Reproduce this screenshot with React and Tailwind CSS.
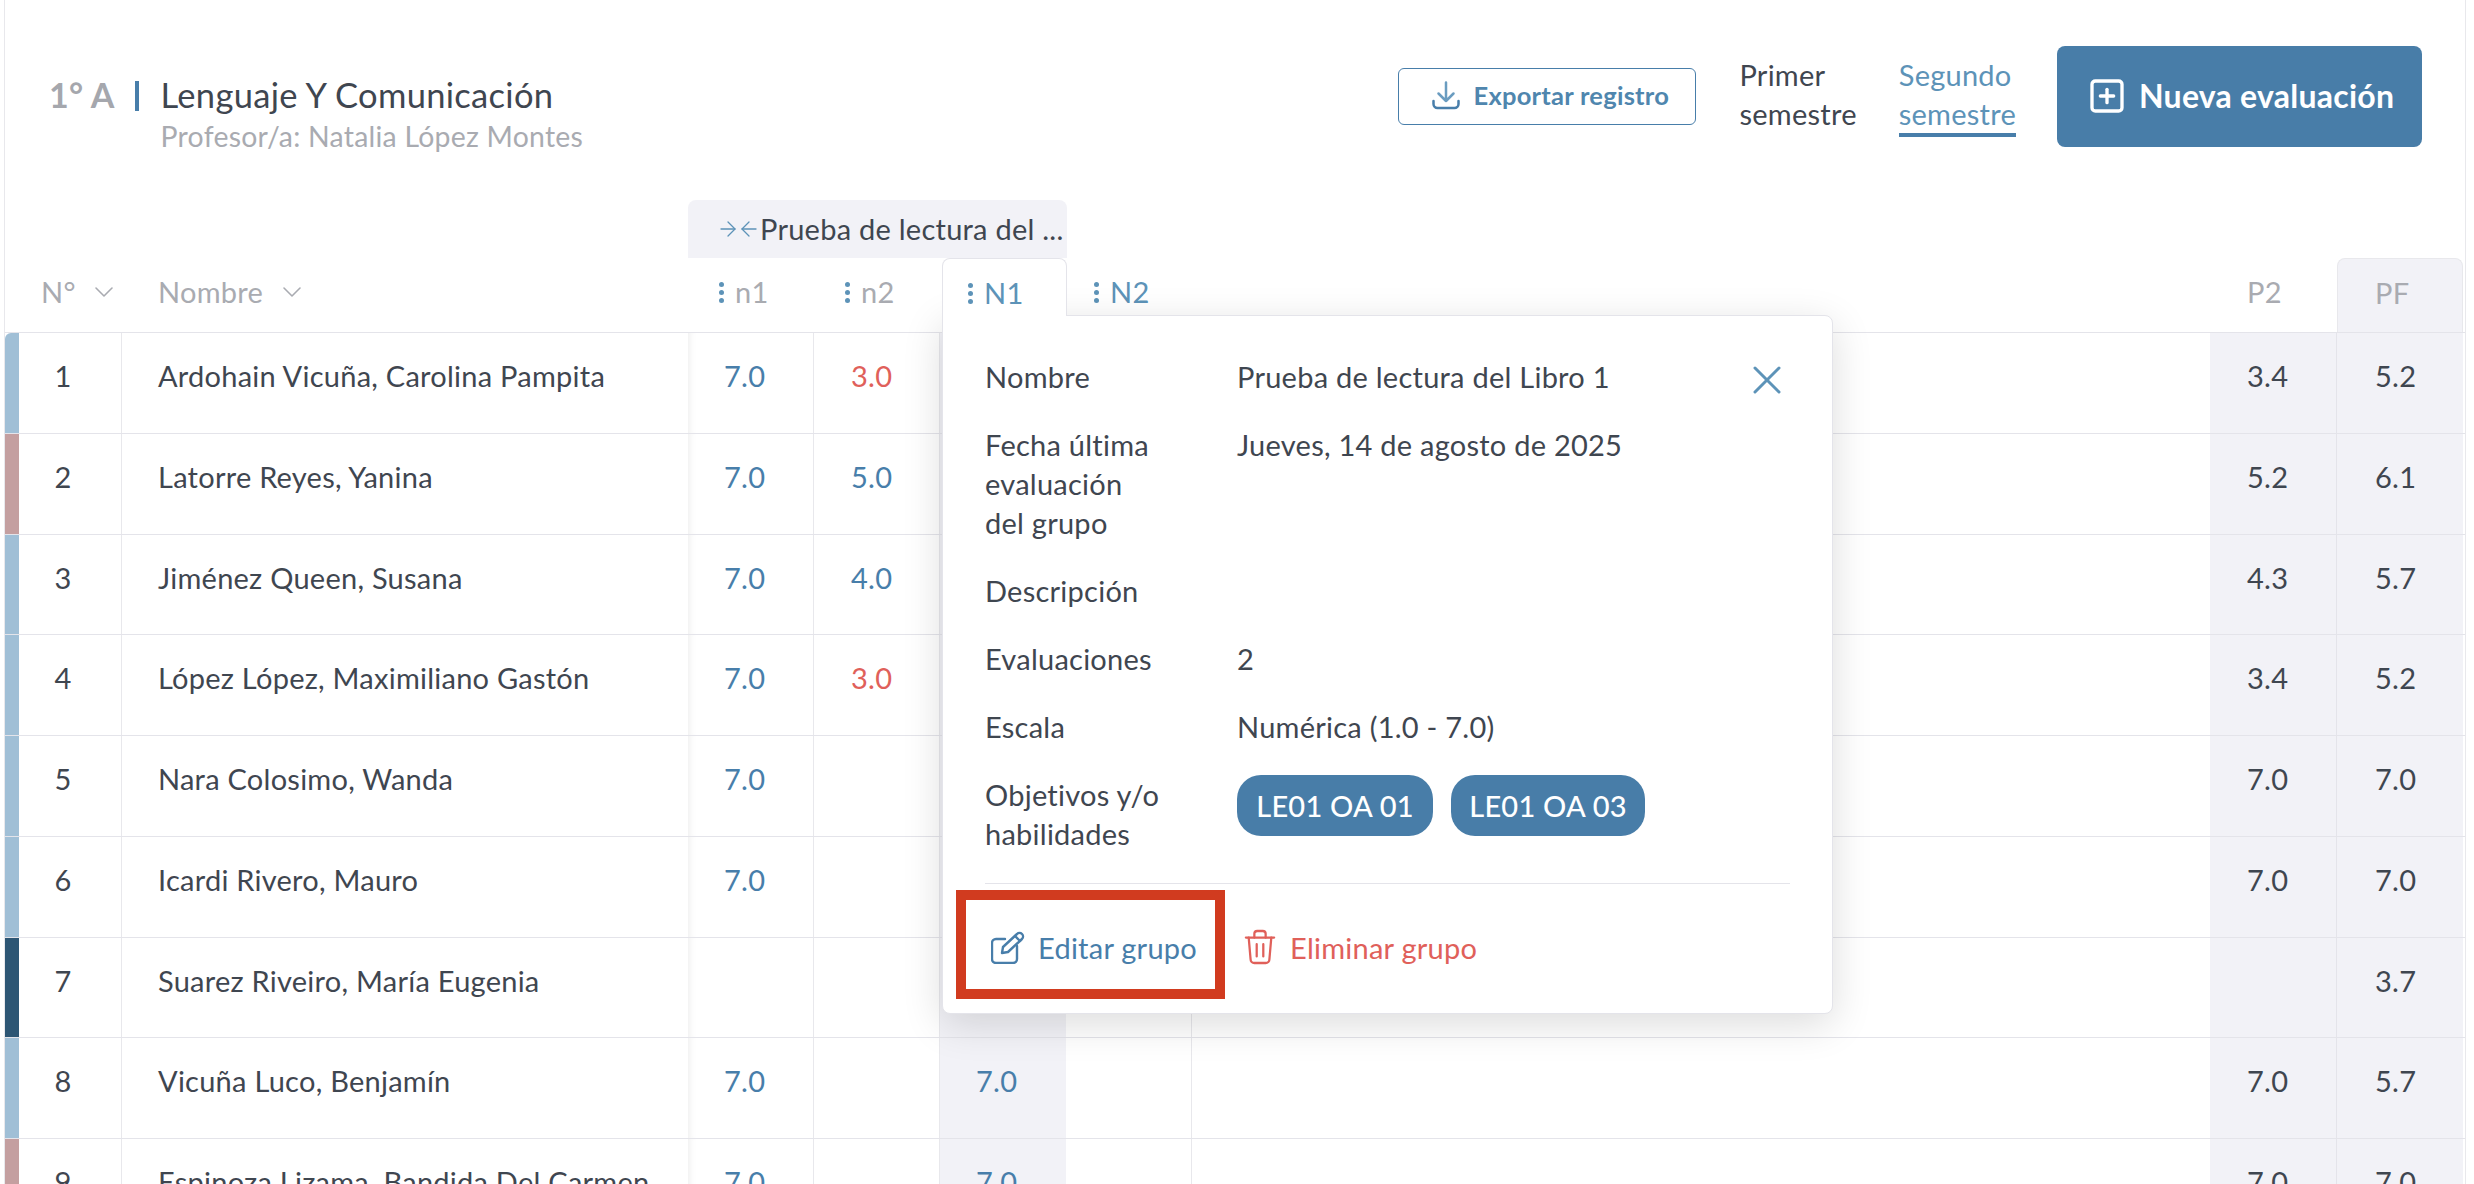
import { ArrowLeft, ArrowRight, ChevronDown, SquarePlus, X } from "lucide-react";

const rows = [
  { n: 1, name: "Ardohain Vicuña, Carolina Pampita", bar: "bg-[#a0bfd6] rounded-tl-[6px]", a: "7.0", b: "3.0", red: true, p2: "3.4", pf: "5.2" },
  { n: 2, name: "Latorre Reyes, Yanina", bar: "bg-[#c49fa0]", a: "7.0", b: "5.0", p2: "5.2", pf: "6.1" },
  { n: 3, name: "Jiménez Queen, Susana", bar: "bg-[#a0bfd6]", a: "7.0", b: "4.0", p2: "4.3", pf: "5.7" },
  { n: 4, name: "López López, Maximiliano Gastón", bar: "bg-[#a0bfd6]", a: "7.0", b: "3.0", red: true, p2: "3.4", pf: "5.2" },
  { n: 5, name: "Nara Colosimo, Wanda", bar: "bg-[#a0bfd6]", a: "7.0", p2: "7.0", pf: "7.0" },
  { n: 6, name: "Icardi Rivero, Mauro", bar: "bg-[#a0bfd6]", a: "7.0", p2: "7.0", pf: "7.0" },
  { n: 7, name: "Suarez Riveiro, María Eugenia", bar: "bg-[#2d5674]", pf: "3.7" },
  { n: 8, name: "Vicuña Luco, Benjamín", bar: "bg-[#a0bfd6]", a: "7.0", c: "7.0", p2: "7.0", pf: "5.7" },
  { n: 9, name: "Espinoza Lizama, Bandida Del Carmen", bar: "bg-[#c49fa0]", a: "7.0", c: "7.0", p2: "7.0", pf: "7.0" },
];

function Kebab() {
  return (
    <span className="flex flex-col gap-[3px] mr-[11px]">
      <span className="w-[5px] h-[5px] rounded-full bg-[#5d93b8]" />
      <span className="w-[5px] h-[5px] rounded-full bg-[#5d93b8]" />
      <span className="w-[5px] h-[5px] rounded-full bg-[#5d93b8]" />
    </span>
  );
}

function ColHead({ label, active, pl }) {
  return (
    <div className={`w-[126px] shrink-0 flex items-center h-[40px] mt-[14px] ${pl} ${active ? "text-[#5d93b8]" : "text-[#a9abb1]"}`}>
      <Kebab />
      {label}
    </div>
  );
}

function Row({ row }) {
  return (
    <div className="flex h-[100.75px] pr-[2px] border-b border-[#e4e4ea] text-[#3f4650] leading-[40px]">
      <div className="relative w-[117px] shrink-0 border-r border-[#e8e8ec] pt-[23px] text-center">
        <span className={`absolute left-0 top-0 bottom-0 w-[14px] ${row.bar}`} />
        {row.n}
      </div>
      <div className="w-[566px] shrink-0 pt-[23px] pl-[36px]">{row.name}</div>
      <div className="w-[126px] shrink-0 border-r border-[#e8e8ec] pt-[23px] pl-[36px] text-[#487eaa] shadow-[inset_8px_0_8px_-8px_rgba(0,0,0,0.1)]">{row.a}</div>
      <div className={`w-[126px] shrink-0 border-r border-[#e8e8ec] pt-[23px] pl-[37px] ${row.red ? "text-[#e0605a]" : "text-[#487eaa]"}`}>{row.b}</div>
      <div className="w-[126px] shrink-0 bg-[#f2f2f7] pt-[23px] pl-[36px] text-[#487eaa]">{row.c}</div>
      <div className="w-[126px] shrink-0 border-r border-[#e8e8ec]" />
      <div className="flex-1" />
      <div className="w-[127px] shrink-0 bg-[#f2f2f7] border-r border-[#e4e4ea] pt-[23px] pl-[37px]">{row.p2}</div>
      <div className="w-[126px] shrink-0 bg-[#f2f2f7] pt-[23px] pl-[38px]">{row.pf}</div>
    </div>
  );
}

function InfoRow({ label, children }) {
  return (
    <div className="flex">
      <div className="w-[252px] shrink-0">
        <div className="max-w-[176px]">{label}</div>
      </div>
      <div className="flex-1">{children}</div>
    </div>
  );
}

export default function App() {
  return (
    <div className="relative w-[2474px] h-[1184px] overflow-hidden bg-white font-['Lato','Noto_Sans',sans-serif] text-[29px] tracking-[0.25px]">
      <div className="ml-[4px] mr-[8px] h-[1184px] border-x border-[#e8e8ec]">

        {/* top bar */}
        <div className="flex items-start h-[200px] pl-[44px] pr-[43px]">
          <div className="flex items-start mt-[72px]">
            <span className="text-[34px] leading-[46px] font-bold text-[#a5a7ad]">1° A</span>
            <span className="w-[4px] h-[30px] mt-[9px] bg-[#487eaa] ml-[20px] mr-[22px]" />
            <div>
              <div className="text-[34.5px] leading-[46px] tracking-[0.3px] text-[#3f4650]">Lenguaje Y Comunicación</div>
              <div className="text-[28.4px] leading-[40px] -mt-[2px] text-[#a9abb1]">Profesor/a: Natalia López Montes</div>
            </div>
          </div>
          <div className="flex-1" />
          <button className="flex items-center w-[298px] h-[57px] mt-[68px] pb-[2px] pl-[33px] gap-[13px] rounded-[6px] border border-[#487eaa] text-[25.5px] font-bold text-[#4f86ae]">
            <svg width="28" height="29" viewBox="0 0 28 29" fill="none" stroke="#6a9cc0" strokeWidth="2.5" strokeLinecap="round" strokeLinejoin="round">
              <path d="M14 1.5V20M6.5 12.5 14 20l7.5-7.5" />
              <path d="M1.5 20v3a4 4 0 0 0 4 4h17a4 4 0 0 0 4-4v-3" stroke="#487eaa" />
            </svg>
            Exportar registro
          </button>
          <div className="ml-[43px] mt-[55px] leading-[39px] text-[#3f4650]">
            Primer
            <br />
            semestre
          </div>
          <div className="ml-[42px] mt-[55px] leading-[39px] text-[#5d93b8]">
            <div>Segundo</div>
            <div>semestre</div>
            <div className="h-[4px] bg-[#487eaa]" />
          </div>
          <button className="flex items-center w-[365px] h-[101px] mt-[46px] ml-[41px] pb-[2px] pl-[30px] gap-[12px] rounded-[8px] bg-[#487da8] text-[32px] font-bold text-white">
            <SquarePlus size={40} strokeWidth={2} />
            Nueva evaluación
          </button>
        </div>

        {/* group header */}
        <div className="flex h-[58px]">
          <div className="w-[683px] shrink-0" />
          <div className="flex items-center w-[379px] pl-[28px] rounded-t-[8px] bg-[#f2f2f7] text-[#3f4650]">
            <ArrowRight size={24} strokeWidth={1.3} className="text-[#5d93b8]" />
            <ArrowLeft size={24} strokeWidth={1.3} className="-ml-[3px] -mr-[1px] text-[#5d93b8]" />
            Prueba de lectura del ...
          </div>
        </div>

        {/* column headers */}
        <div className="flex h-[75px] pr-[2px] border-b border-[#e4e4ea] text-[#a9abb1]">
          <div className="flex items-center w-[117px] h-[40px] mt-[14px] pl-[36px] shrink-0">
            N°
            <ChevronDown size={32} strokeWidth={1.2} className="ml-[12px]" />
          </div>
          <div className="flex items-center w-[566px] h-[40px] mt-[14px] pl-[36px] shrink-0">
            Nombre
            <ChevronDown size={32} strokeWidth={1.2} className="ml-[13px]" />
          </div>
          <ColHead label="n1" pl="pl-[31px]" />
          <ColHead label="n2" pl="pl-[31px]" />
          <ColHead label="N1" active pl="pl-[26px]" />
          <ColHead label="N2" active pl="pl-[28px]" />
          <div className="flex-1" />
          <div className="w-[127px] shrink-0 mt-[14px] leading-[40px] pl-[37px]">P2</div>
          <div className="w-[126px] shrink-0 pt-[14px] leading-[40px] pl-[37px] bg-[#f2f2f7] border border-b-0 border-[#e8e8ec] rounded-t-[8px]">PF</div>
        </div>

        {rows.map((row) => (
          <Row key={row.n} row={row} />
        ))}
      </div>

      {/* N1 tab joined to the popover */}
      <div className="absolute left-[942px] top-[258px] w-[125px] h-[58px] bg-white border border-b-0 border-[#e4e4ea] rounded-t-[8px] z-10 flex items-start pt-[14px] pl-[25px] text-[#5d93b8]">
        <span className="flex items-center h-[40px]">
          <Kebab />
          N1
        </span>
      </div>

      {/* group popover */}
      <div className="absolute left-[942px] top-[315px] w-[891px] h-[699px] bg-white border border-[#e4e4ea] rounded-b-[8px] rounded-tr-[8px] shadow-[0_10px_40px_rgba(0,0,0,0.14)] pt-[41px] px-[42px] leading-[39px] text-[#3f4650]">
        <button className="absolute right-[41px] top-[40px] text-[#5d93b8]">
          <X size={48} strokeWidth={1.5} />
        </button>
        <div className="flex flex-col gap-[29px]">
          <InfoRow label="Nombre">Prueba de lectura del Libro 1</InfoRow>
          <InfoRow label="Fecha última evaluación del grupo">Jueves, 14 de agosto de 2025</InfoRow>
          <InfoRow label="Descripción" />
          <InfoRow label="Evaluaciones">2</InfoRow>
          <InfoRow label="Escala">Numérica (1.0 - 7.0)</InfoRow>
          <InfoRow label="Objetivos y/o habilidades">
            <div className="flex gap-[18px]">
              <span className="flex items-center justify-center w-[196px] h-[61px] rounded-[24px] bg-[#487da8] text-white font-medium">LE01 OA 01</span>
              <span className="flex items-center justify-center w-[194px] h-[61px] rounded-[24px] bg-[#487da8] text-white font-medium">LE01 OA 03</span>
            </div>
          </InfoRow>
        </div>
        <div className="h-px bg-[#e4e4ea] mt-[30px]" />
        <div className="flex items-center h-[114px] mt-[6px]">
          <button className="flex items-center gap-[13px] text-[#487eaa] ml-[6px]">
            <svg width="34" height="33" viewBox="0 0 34 33" fill="none" stroke="currentColor" strokeWidth="2.4" strokeLinecap="round" strokeLinejoin="round">
              <path d="M14 8H5a4 4 0 0 0-4 4v16a4 4 0 0 0 4 4h17a4 4 0 0 0 4-4V15" />
              <path d="M11 22l1-6L26 3a3.5 3.5 0 0 1 5 5L17 21z" />
              <path d="M24 5l5 5" />
            </svg>
            Editar grupo
          </button>
          <button className="flex items-center gap-[14px] text-[#e0605a] ml-[47px]">
            <svg width="32" height="36" viewBox="0 0 34 38" fill="none" stroke="currentColor" strokeWidth="2.4" strokeLinecap="round" strokeLinejoin="round">
              <path d="M2 9h30" />
              <path d="M11 9V5a3 3 0 0 1 3-3h6a3 3 0 0 1 3 3v4" />
              <path d="M5 9l2 23a4 4 0 0 0 4 4h12a4 4 0 0 0 4-4l2-23" />
              <path d="M13.5 16v13M20.5 16v13" />
            </svg>
            Eliminar grupo
          </button>
        </div>
      </div>

      {/* red highlight around the edit action */}
      <div className="absolute left-[956px] top-[890px] w-[269px] h-[109px] border-[10px] border-[#d13b1f] z-20" />
    </div>
  );
}
